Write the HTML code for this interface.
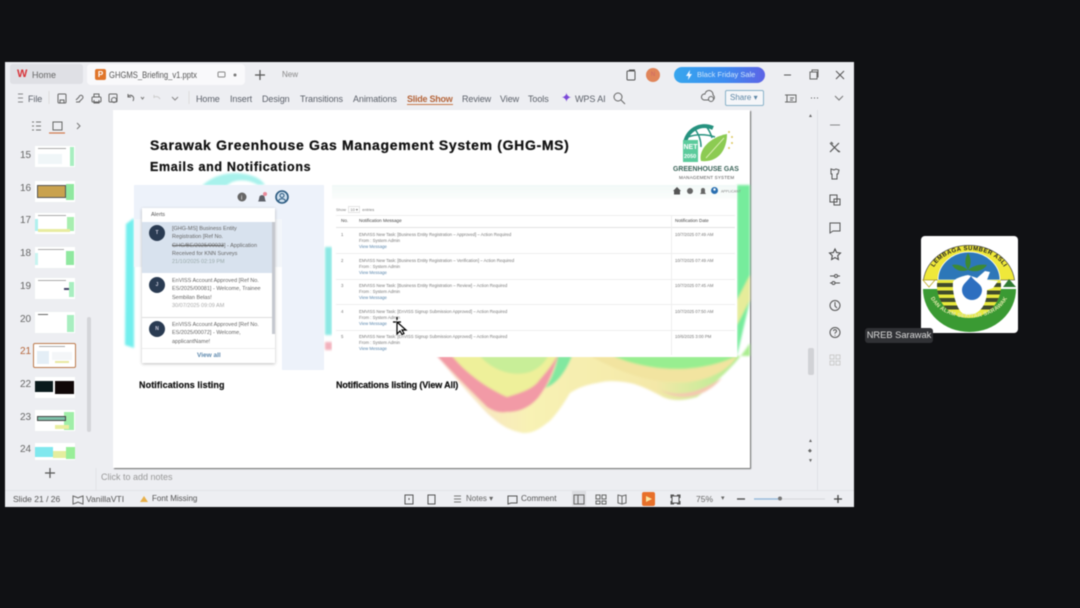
<!DOCTYPE html>
<html><head><meta charset="utf-8"><style>
html,body{margin:0;padding:0;width:1080px;height:608px;overflow:hidden;background:#101114;font-family:"Liberation Sans",sans-serif}
#w{position:absolute;left:0;top:0;width:1080px;height:608px;overflow:hidden;filter:blur(.5px)}
.a{position:absolute;white-space:nowrap}
.m{font-size:9px;color:#5a5f68;letter-spacing:-.07px}
.n{font-size:10px;color:#666}
.th{position:absolute;left:35px;width:40px;height:21px;background:#fff;overflow:hidden}
.th i{position:absolute;display:block}
.d{font-size:4.3px;color:#777;position:absolute;white-space:nowrap}
.l{font-size:4.3px;color:#5a86ad;position:absolute;white-space:nowrap}
.al{font-size:5.5px;line-height:8.3px;color:#666;position:absolute;white-space:nowrap}
.av{position:absolute;left:149px;width:16px;height:16px;border-radius:50%;background:#2a3b52;color:#ccd;font-size:5px;font-weight:bold;text-align:center;line-height:16px}
svg{position:absolute;overflow:visible}
</style></head><body><div id="w">
<div class="a" style="left:5px;top:62px;width:849px;height:445px;background:#edeef2"></div>
<div class="a" style="left:572px;top:491px;width:14px;height:15px;background:#dcdde1"></div>
<div class="a" style="left:10px;top:64px;width:73px;height:20px;background:#dfe0e5;border-radius:3px"></div>
<div class="a" style="left:87px;top:64px;width:158px;height:21px;background:#f9f9fb;border-radius:4px"></div>
<div class="a" style="left:17px;top:68px;font-size:11px;font-weight:bold;color:#d8343a">W</div>
<div class="a" style="left:32px;top:70px;font-size:9px;color:#666">Home</div>
<div class="a" style="left:95px;top:69px;width:11px;height:11px;background:#e0752a;border-radius:2px;color:#fff;font-size:8px;font-weight:bold;text-align:center;line-height:11px">P</div>
<div class="a" style="left:109px;top:70px;font-size:9px;color:#555;transform:scaleX(.85);transform-origin:left top">GHGMS_Briefing_v1.pptx</div>
<svg style="left:0;top:0" width="1080" height="608" fill="none" stroke="#666" stroke-width="1">
<rect x="218" y="72" width="7" height="5" rx="1" stroke="#888"/><circle cx="235" cy="75" r="1.5" fill="#777" stroke="none"/>
<path d="M260 70v10M255 75h10" stroke="#555" stroke-width="1.2"/>
<rect x="627" y="71" width="8" height="9" rx="1" stroke="#555"/><path d="M629 70h6" stroke="#555"/>
<path d="M784 75h7" stroke="#555"/><rect x="810" y="72" width="7" height="7" stroke="#666"/><path d="M812 72v-2h6v7h-1" stroke="#666"/><path d="M836 71l8 8M844 71l-8 8" stroke="#555"/>
<path d="M18 94h5M18 98h5M18 102h5" stroke="#888"/>
<path d="M49 91v13" stroke="#ddd"/>
<rect x="58" y="94" width="8" height="9" rx="1"/><path d="M60 103v-3h4v3"/>
<path d="M76 100l3-3a2 2 0 1 1 3 2l-3 3M76 102h4" />
<rect x="92" y="97" width="9" height="5" rx="1"/><path d="M94 97v-3h5v3M94 100v3h5v-3"/>
<rect x="109" y="94" width="8" height="8" rx="1"/><circle cx="114" cy="100" r="2.5"/>
<path d="M128 96c4-2 7 1 5 5M128 94v3h3"/><path d="M141 97l1.500 2 1.500-2" stroke="#777"/>
<path d="M154 97c3-1 5 0 6 2M154 95v3" stroke="#ccc"/><path d="M172 97l3 3 3-3" stroke="#888"/>
<path d="M189 91v13" stroke="#ddd"/>
<circle cx="618" cy="97" r="4" stroke="#666"/><path d="M621 100l4 4" stroke="#666"/>
<path d="M704 100a3 3 0 0 1 1-6 4 4 0 0 1 8 1 3 3 0 0 1 0 5z" stroke="#666"/><circle cx="711" cy="99" r="2.500" fill="#edeef2" stroke="#666"/>
<rect x="787" y="95" width="9" height="7" stroke="#666"/><path d="M785 95h3M785 102h3M790 98h4M790 100h3" stroke="#666"/>
<path d="M811 98h1M814 98h1M817 98h1" stroke="#555"/><path d="M835 96l4 4 4-4" stroke="#777"/>
<path d="M36 122h5M36 126h5M36 130h5M32 122h2M32 126h2M32 130h2" stroke="#777"/>
<rect x="53" y="122" width="9" height="8" stroke="#666"/><path d="M49 133h16" stroke="#d2794a" stroke-width="1.200"/>
<path d="M77 123l3 3-3 3" stroke="#777"/>
<path d="M45 473h10M50 468v10" stroke="#555" stroke-width="1.200"/>
<path d="M830 125h10" stroke="#888"/>
<path d="M830 143l9 9M839 143l-9 9M831 142l2 2M837 150l3 2" stroke="#555" stroke-width="1.200"/>
<path d="M831 169l3 1 2-1 3 1-1 4h-1v5h-5v-5h-1z" stroke="#555"/>
<rect x="830" y="195" width="7" height="7" stroke="#555"/><rect x="834" y="199" width="6" height="6" stroke="#555"/>
<path d="M830 223h10v8h-7l-3 2z" stroke="#555"/>
<path d="M835 249l1.600 3.500 3.900.5-2.800 2.600.7 3.900-3.400-1.900-3.400 1.900.7-3.900-2.800-2.600 3.900-.5z" stroke="#444"/>
<path d="M830 276h5M838 276h2M830 283h2M835 283h5" stroke="#555"/><circle cx="836" cy="276" r="1.500" stroke="#555"/><circle cx="833.500" cy="283" r="1.500" stroke="#555"/>
<circle cx="835" cy="305.500" r="5" stroke="#555"/><path d="M835 302v4l2 2" stroke="#555"/>
<circle cx="835" cy="332.500" r="5" stroke="#555"/><path d="M833.500 331a1.500 1.500 0 1 1 2 1.500c-.5.300-.5.700-.5 1.200M835 335v.6" stroke="#555"/>
<rect x="830" y="355" width="4" height="4" stroke="#ccc"/><rect x="836" y="355" width="4" height="4" stroke="#ccc"/><rect x="830" y="361" width="4" height="4" stroke="#ccc"/><rect x="836" y="361" width="4" height="4" stroke="#ccc"/>
<path d="M96 468v22" stroke="#e2e3e7"/><path d="M817.500 110v380" stroke="#e0e1e6"/><path d="M5 490.500h849" stroke="#e2e3e7"/>
<path d="M73 496l3 1 2 1 2-1 3-1v8l-3-1-2-1-2 1-3 1z" stroke="#666"/>
<path d="M144 496l4 6h-8z" fill="#e8b04a" stroke="none"/>
<rect x="405" y="495" width="8" height="9" stroke="#555"/><path d="M409 498v2" stroke="#555"/>
<rect x="428" y="495" width="7" height="9" stroke="#555"/>
<path d="M454 496h7M454 499h7M454 502h7" stroke="#777"/>
<path d="M508 504v-8h9v7h-6z" stroke="#555"/>
<rect x="574" y="495" width="10" height="9" stroke="#666"/><path d="M578 495v9" stroke="#666"/>
<rect x="596" y="495" width="4" height="4" stroke="#666"/><rect x="602" y="495" width="4" height="4" stroke="#666"/><rect x="596" y="501" width="4" height="3" stroke="#666"/><rect x="602" y="501" width="4" height="3" stroke="#666"/>
<path d="M622 504v-8l-4-1v8zM622 504v-8l4-1v8z" stroke="#666"/>
<rect x="672" y="496" width="7" height="7" stroke="#555"/><path d="M671 498v-3h3M677 495h3v3M680 501v3h-3M674 504h-3v-3" stroke="#555"/>
<path d="M737 499h8" stroke="#444" stroke-width="1.300"/>
<path d="M834 499h8M838 495v8" stroke="#444" stroke-width="1.300"/>
<path d="M754 499h24" stroke="#8ab4d8" stroke-width="1.200"/><path d="M782 499h43" stroke="#d4d6da"/>
<circle cx="780" cy="498.500" r="2" fill="#777" stroke="none"/>
</svg>
<div class="a" style="left:646px;top:68px;width:14px;height:14px;border-radius:50%;background:#e0855a;color:#c66;font-size:6px;text-align:center;line-height:14px">N</div>
<div class="a" style="left:674px;top:67px;width:91px;height:16px;border-radius:8px;background:linear-gradient(90deg,#37a6ee,#3d8cf0 55%,#5d63e6);color:#cfe6fb;font-size:7.500px;line-height:16px;text-indent:23px">Black Friday Sale</div>
<svg style="left:685px;top:70px" width="8" height="10"><path d="M5 0L1 6h2.500L3 10l4-6H4.500z" fill="#eaf4ff"/></svg>
<div class="a m" style="left:28px;top:94px">File</div>
<div class="a m" style="left:196px;top:94px">Home</div>
<div class="a m" style="left:230px;top:94px">Insert</div>
<div class="a m" style="left:262px;top:94px">Design</div>
<div class="a m" style="left:300px;top:94px">Transitions</div>
<div class="a m" style="left:353px;top:94px">Animations</div>
<div class="a m" style="left:407px;top:94px;color:#b5653a;font-weight:bold;border-bottom:1px solid #c8794a;letter-spacing:-.25px">Slide Show</div>
<div class="a m" style="left:462px;top:94px">Review</div>
<div class="a m" style="left:500px;top:94px">View</div>
<div class="a m" style="left:528px;top:94px">Tools</div>
<div class="a m" style="left:561px;top:90px;font-size:13px;color:#7a48d8">✦</div>
<div class="a m" style="left:575px;top:94px">WPS AI</div>
<div class="a" style="left:725px;top:90px;width:37px;height:14px;border:1px solid #8ab2c9;border-radius:2px;color:#5c86a5;font-size:8px;line-height:14px;text-indent:4px;background:#f5f6f9">Share ▾</div>
<div class="a" style="left:282px;top:70px;font-size:8px;color:#888">New</div>

<div class="a" style="left:113px;top:110px;width:637px;height:358px;background:#fff;box-shadow:1px 1px 1px #666;overflow:hidden"></div>
<svg style="left:113px;top:110px" width="637" height="358" viewBox="113 110 637 358">
<defs>
<linearGradient id="g" x1="0" x2="1"><stop offset="0" stop-color="#f8dccc"/><stop offset=".3" stop-color="#f8f2b4"/><stop offset=".7" stop-color="#f4e8a8"/><stop offset="1" stop-color="#a8ee90"/></linearGradient>
<filter id="b"><feGaussianBlur stdDeviation="1"/></filter>
</defs>
<g filter="url(#b)">
<path d="M437 356H750V343C742 355 730 372 697 397C680 402 670 400 663 397C650 390 640 385 630 383C615 380 605 381 597 383C585 385 578 388 570 393C560 410 550 422 547 423C535 433 528 433 523 433C505 430 495 420 487 413C470 395 450 372 437 356Z" fill="url(#g)"/>
<path d="M437 356L463 383 487 407C495 412 500 413 507 412C520 412 530 407 538 398C548 385 553 372 558 356Z" fill="#f29aa6"/>
<path d="M452 356C462 368 480 385 507 397C520 393 530 390 537 383C548 370 553 364 557 356Z" fill="#eef09a"/>
<path d="M480 356C490 368 510 378 530 372C540 368 545 362 548 356Z" fill="#c8ee98"/>
<path d="M558 356C556 368 550 382 545 388C556 385 566 372 572 356Z" fill="#82e8a0"/>
<path d="M590 356C620 372 650 385 690 382C715 378 730 368 737 356Z" fill="#f2e4a0"/>
<path d="M613 356C640 368 690 378 737 356Z" fill="#98ee90"/>
<path d="M660 390C680 398 700 392 722 378C705 398 680 402 660 390Z" fill="#f4c8b0"/>
<path d="M737 185H750V300L737 356Z" fill="#76ec9c"/>
<path d="M737 300L750 275V300L737 325Z" fill="#e6ec9a"/>
<path d="M202 186C212 176 228 171 245 174 256 176 262 180 265 185H258C250 180 240 179 232 182L226 186Z" fill="#a8f2ec"/>
<path d="M134 218L126 224 125 345 134 348Z" fill="#72efee"/>
<path d="M325 247H332V335H325Z" fill="#8ce8e4"/>
<path d="M325 342H332V350H325Z" fill="#f2b0bc"/>
</g>
</svg>
<div class="a" style="left:150px;top:137px;font-size:14px;font-weight:bold;color:#111;letter-spacing:.67px;-webkit-text-stroke:.25px #111">Sarawak Greenhouse Gas Management System (GHG-MS)</div>
<div class="a" style="left:150px;top:160px;font-size:12.500px;font-weight:bold;color:#111;letter-spacing:.67px;-webkit-text-stroke:.25px #111">Emails and Notifications</div>

<svg style="left:680px;top:122px" width="60" height="44">
<path d="M5 22C6 9 20 0 33 6" fill="none" stroke="#26927f" stroke-width="4"/>
<path d="M15 7c4 6 6 11 6 18M26 4c3 4 5 8 6 12M8 15c8-3 18-3 27 0" fill="none" stroke="#26927f" stroke-width="1.500"/>
<path d="M21 39C18 28 30 15 47 12 47 28 38 41 21 39Z" fill="#8ccb52"/>
<path d="M26 36L44 16" stroke="#d8eeb0" fill="none"/>
<rect x="3" y="18" width="15" height="22" fill="#5bcb9c"/>
<text x="3.500" y="27" font-size="7" fill="#fff" font-weight="bold" font-family="Liberation Sans">NET</text>
<text x="4" y="36" font-size="5.500" fill="#fff" font-weight="bold" font-family="Liberation Sans">2050</text>
<circle cx="49" cy="10" r="1" fill="#ddc860"/><circle cx="52" cy="15" r="1" fill="#ddc860"/><circle cx="52" cy="21" r="1" fill="#ddc860"/><circle cx="49" cy="26" r="1" fill="#ddc860"/>
</svg>
<div class="a" style="left:673px;top:166px;font-size:6.900px;font-weight:bold;color:#3a6358">GREENHOUSE GAS</div>
<div class="a" style="left:679px;top:175px;font-size:4.500px;color:#555;letter-spacing:.2px">MANAGEMENT SYSTEM</div>

<div class="a" style="left:134px;top:185px;width:190px;height:34px;background:#edf2fa"></div>
<div class="a" style="left:282px;top:185px;width:42px;height:185px;background:#edf2fa"></div>
<div class="a" style="left:134px;top:219px;width:148px;height:48px;background:#f3f6fa"></div>
<div class="a" style="left:142px;top:208px;width:133px;height:155px;background:#fff;box-shadow:0 1px 3px rgba(0,0,0,.25)"></div>
<div class="a" style="left:142px;top:222px;width:130px;height:51px;background:#d8e2ee"></div>
<div class="a" style="left:272px;top:222px;width:3px;height:112px;background:#c5c8cf"></div>
<div class="a" style="left:142px;top:317px;width:130px;height:1px;background:#ddd"></div>
<div class="a" style="left:142px;top:348px;width:133px;height:1px;background:#eee"></div>
<div class="a" style="left:151px;top:212px;font-size:5.500px;color:#555">Alerts</div>
<div class="av" style="top:225px">T</div><div class="av" style="top:277px">J</div><div class="av" style="top:321px">N</div>
<div class="al" style="left:172px;top:225px">[GHG-MS] Business Entity<br>Registration [Ref No.<br><span style="text-decoration:line-through">GHG/BE/2025/00023</span>] - Application<br>Received for KNN Surveys<br><span style="color:#9aa">21/10/2025 02:19 PM</span></div>
<div class="al" style="left:172px;top:277px">EnVISS Account Approved [Ref No.<br>ES/2025/00081] - Welcome, Trainee<br>Sembilan Belas!<br><span style="color:#aaa">30/07/2025 09:09 AM</span></div>
<div class="al" style="left:172px;top:321px">EnVISS Account Approved [Ref No.<br>ES/2025/00072] - Welcome,<br>applicantName!</div>
<div class="a" style="left:197px;top:352px;font-size:6.500px;font-weight:bold;color:#5d88ad">View all</div>
<svg style="left:236px;top:189px" width="56" height="16">
<circle cx="6" cy="8" r="4.500" fill="#666"/><text x="5" y="10.500" font-size="6" fill="#fff" font-family="Liberation Sans">i</text>
<path d="M22 12.500c1-1 1-3 1.500-5a3 3 0 0 1 5 0c.5 2 .5 4 1.500 5z" fill="#5c6068"/><circle cx="29" cy="5" r="2" fill="#e88a9a"/>
<circle cx="46" cy="8" r="6" fill="#cfe0ee" stroke="#2a5a80" stroke-width="1.600"/><circle cx="46" cy="6.500" r="2" fill="none" stroke="#2a5a80"/><path d="M42.500 12c1-3 6-3 7 0" fill="none" stroke="#2a5a80"/>
</svg>

<div class="a" style="left:332px;top:185px;width:405px;height:172px;background:#fff"></div>
<div class="a" style="left:332px;top:185px;width:405px;height:14px;background:linear-gradient(#f2f9f7,#fbfdfc)"></div>
<svg style="left:672px;top:185px" width="66" height="12">
<path d="M1 6l4-4 4 4h-1v3.500H2V6z" fill="#555"/><circle cx="18" cy="6" r="3" fill="#666"/><path d="M28 9h6l-1-1.500V5a2 2 0 0 0-4 0v2.500z" fill="#666"/><circle cx="42.500" cy="5.500" r="3.500" fill="#2a6fb0"/><circle cx="42.500" cy="4.500" r="1.200" fill="#fff"/>
<text x="49" y="7.500" font-size="3.600" fill="#888" font-family="Liberation Sans">APPLICANT</text>
</svg>
<div class="d" style="left:336px;top:207px;font-size:4px">Show &nbsp;<span style="border:1px solid #e4e4e4">&nbsp;10 ▾&nbsp;</span>&nbsp; entries</div>
<div class="a" style="left:336px;top:215px;width:399px;height:1px;background:#eee"></div>
<div class="a" style="left:336px;top:227px;width:399px;height:1px;background:#e2e2e2"></div>
<div class="a" style="left:336px;top:253px;width:399px;height:1px;background:#eee"></div>
<div class="a" style="left:336px;top:279px;width:399px;height:1px;background:#eee"></div>
<div class="a" style="left:336px;top:304px;width:399px;height:1px;background:#eee"></div>
<div class="a" style="left:336px;top:330px;width:399px;height:1px;background:#eee"></div>
<div class="a" style="left:671px;top:215px;width:1px;height:140px;background:#eee"></div>
<div class="d" style="left:341px;top:218px;color:#444;font-size:4.600px">No.</div>
<div class="d" style="left:359px;top:218px;color:#444;font-size:4.600px">Notification Message</div>
<div class="d" style="left:675px;top:218px;color:#444;font-size:4.600px">Notification Date</div>
<div class="d" style="left:341px;top:232px">1</div><div class="d" style="left:341px;top:258px">2</div><div class="d" style="left:341px;top:283px">3</div><div class="d" style="left:341px;top:309px">4</div><div class="d" style="left:341px;top:334px">5</div>
<div class="d" style="left:359px;top:232px">EMVISS New Task: [Business Entity Registration – Approved] – Action Required</div>
<div class="d" style="left:359px;top:238px">From : System Admin</div><div class="l" style="left:359px;top:244px">View Message</div>
<div class="d" style="left:359px;top:258px">EMVISS New Task: [Business Entity Registration – Verification] – Action Required</div>
<div class="d" style="left:359px;top:264px">From : System Admin</div><div class="l" style="left:359px;top:270px">View Message</div>
<div class="d" style="left:359px;top:283px">EMVISS New Task: [Business Entity Registration – Review] – Action Required</div>
<div class="d" style="left:359px;top:289px">From : System Admin</div><div class="l" style="left:359px;top:295px">View Message</div>
<div class="d" style="left:359px;top:309px">EMVISS New Task: [EnVISS Signup Submission Approved] – Action Required</div>
<div class="d" style="left:359px;top:315px">From : System Admin</div><div class="l" style="left:359px;top:321px">View Message</div>
<div class="d" style="left:359px;top:334px">EMVISS New Task: [EnVISS Signup Submission Approved] – Action Required</div>
<div class="d" style="left:359px;top:340px">From : System Admin</div><div class="l" style="left:359px;top:346px">View Message</div>
<div class="d" style="left:675px;top:232px">10/7/2025 07:49 AM</div><div class="d" style="left:675px;top:258px">10/7/2025 07:49 AM</div><div class="d" style="left:675px;top:283px">10/7/2025 07:45 AM</div><div class="d" style="left:675px;top:309px">10/7/2025 07:50 AM</div><div class="d" style="left:675px;top:334px">10/6/2025 3:00 PM</div>
<svg style="left:390px;top:316px" width="18" height="20">
<path d="M7 6v12l3-3 2 3.500 2-1-2-3.500h4z" fill="#fff" stroke="#000" stroke-width="1.200"/>
<path d="M3 6h3M8 6h3M7 1v3" stroke="#000" stroke-width="1.200"/>
</svg>
<div class="a" style="left:139px;top:380px;font-size:9px;font-weight:bold;color:#111;letter-spacing:.1px;-webkit-text-stroke:.2px #111">Notifications listing</div>
<div class="a" style="left:336px;top:380px;font-size:9px;font-weight:bold;color:#111;letter-spacing:-.12px;-webkit-text-stroke:.2px #111">Notifications listing (View All)</div>

<div class="a" style="left:808px;top:348px;width:6px;height:27px;background:#d1d2d6;border-radius:2px"></div>
<div class="a" style="left:87px;top:317px;width:4px;height:115px;background:#d4d5d9;border-radius:2px"></div>
<div class="a" style="left:808px;top:113px;font-size:5px;color:#666">▲</div>
<div class="a" style="left:808px;top:436px;font-size:5px;line-height:10px;color:#666">▲<br>◆<br>▼</div>

<div class="a n" style="left:20px;top:150px">15</div><div class="a n" style="left:20px;top:183px">16</div><div class="a n" style="left:20px;top:215px">17</div><div class="a n" style="left:20px;top:248px">18</div><div class="a n" style="left:20px;top:281px">19</div><div class="a n" style="left:20px;top:314px">20</div><div class="a n" style="left:20px;top:346px;color:#b5653a">21</div><div class="a n" style="left:20px;top:379px">22</div><div class="a n" style="left:20px;top:412px">23</div><div class="a n" style="left:20px;top:444px">24</div>
<div class="th" style="top:146px"><i style="right:1px;top:1px;width:4px;height:19px;background:#a8eec0"></i><i style="left:3px;top:2px;width:28px;height:1px;background:#aaa"></i><i style="left:3px;top:8px;width:24px;height:10px;background:#f0f6f8"></i></div>
<div class="th" style="top:181px"><i style="right:1px;top:3px;width:8px;height:16px;background:#90e8a0"></i><i style="left:2px;top:4px;width:29px;height:13px;background:#c9a24e;border:1px solid #555;box-sizing:border-box"></i></div>
<div class="th" style="top:213px"><i style="right:1px;top:4px;width:7px;height:14px;background:#a8eeb0"></i><i style="left:3px;top:2px;width:28px;height:1px;background:#aaa"></i><i style="left:3px;top:16px;width:32px;height:3px;background:#e8eca0"></i><i style="left:0;top:6px;width:3px;height:12px;background:#b0f0ee"></i></div>
<div class="th" style="top:247px"><i style="right:1px;top:4px;width:8px;height:14px;background:#90e8a0"></i><i style="left:3px;top:2px;width:26px;height:1px;background:#aaa"></i><i style="left:0;top:6px;width:3px;height:12px;background:#c8f4f0"></i></div>
<div class="th" style="top:278px"><i style="right:1px;top:4px;width:5px;height:15px;background:#a8eec0"></i><i style="left:3px;top:2px;width:28px;height:1px;background:#aaa"></i><i style="left:29px;top:10px;width:5px;height:2px;background:#446"></i></div>
<div class="th" style="top:312px"><i style="right:1px;top:3px;width:7px;height:17px;background:#a8eec0"></i><i style="left:3px;top:2px;width:10px;height:1px;background:#666"></i></div>
<div class="a" style="left:33px;top:343px;width:41px;height:23px;border:1px solid #bd7a4c;background:#fff;border-radius:2px"></div>
<div class="a" style="left:37px;top:351px;width:12px;height:13px;background:#e4eef6"></div>
<div class="a" style="left:39px;top:346px;width:26px;height:1px;background:#aaa"></div>
<div class="a" style="left:52px;top:352px;width:20px;height:8px;background:#f4f6f8"></div>
<div class="a" style="left:55px;top:361px;width:14px;height:2px;background:#e8e8a0"></div>
<div class="th" style="top:377px"><i style="left:0;top:4px;width:18px;height:11px;background:#0a1a1c"></i><i style="left:20px;top:4px;width:19px;height:13px;background:#100808"></i></div>
<div class="th" style="top:410px"><i style="right:1px;top:2px;width:10px;height:18px;background:#a0eea8"></i><i style="left:2px;top:6px;width:29px;height:5px;background:#7dbfa8;border:1px solid #444;box-sizing:border-box"></i><i style="left:20px;top:15px;width:14px;height:4px;background:#eaeea0"></i></div>
<div class="th" style="top:443px;height:17px"><i style="left:0;top:4px;width:18px;height:10px;background:#80e8ee"></i><i style="left:18px;top:8px;width:14px;height:7px;background:#e4ee9e"></i><i style="right:0;top:4px;width:9px;height:12px;background:#98ee98"></i></div>

<div class="a" style="left:101px;top:472px;font-size:9px;color:#999">Click to add notes</div>
<div class="a" style="left:13px;top:494px;font-size:8.500px;color:#555">Slide 21 / 26</div>
<div class="a" style="left:86px;top:494px;font-size:8.500px;color:#555">VanillaVTI</div>
<div class="a" style="left:152px;top:494px;font-size:8px;color:#555">Font Missing</div>
<div class="a" style="left:466px;top:494px;font-size:8px;color:#666">Notes ▾</div>
<div class="a" style="left:521px;top:494px;font-size:8.200px;color:#555">Comment</div>
<div class="a" style="left:642px;top:492px;width:13px;height:14px;background:#e8702a;border-radius:2px"></div>
<svg style="left:645px;top:495px" width="8" height="8"><path d="M1 1l6 3-6 3z" fill="#fbe6a0"/></svg>
<div class="a" style="left:696px;top:494px;font-size:8.500px;color:#666">75%</div>
<div class="a" style="left:721px;top:494px;font-size:7px;color:#666">▾</div>

<div class="a" style="left:921px;top:236px;width:97px;height:97px;background:#fff;border-radius:4px;overflow:hidden">
<svg style="left:0;top:0" width="97" height="97" viewBox="0 0 97 97">
<defs>
<path id="ta" d="M10 42A38 28 0 0 1 86 42"/><path id="tb" d="M9 60A40 28 0 0 0 87 60"/>
<clipPath id="c"><circle cx="48" cy="50" r="32"/></clipPath>
</defs>
<path d="M2.400 44A46 40 0 0 1 93.600 44Z" fill="#efe83a" stroke="#333" stroke-width=".6"/>
<path d="M17 44A31 28 0 0 1 79 44Z" fill="#2d77b8" stroke="#fff" stroke-width=".8"/>
<path d="M2 53H95A46.500 43 0 0 1 2 53Z" fill="#3a9a33"/>
<g clip-path="url(#c)">
<rect x="16" y="44" width="64" height="38" fill="#e8e83c"/>
<path d="M16 47h64v4H16zM16 54.500h64v4H16zM16 62h64v4H16zM16 69.500h64v4H16z" fill="#3f4a2c"/>
</g>
<path d="M2 44h12l-6 7z" fill="#fff" stroke="#bba820" stroke-width=".8"/>
<path d="M88 43l7 8H82z" fill="#2f7a32"/>
<path d="M32 46C34 42 42 40 47 39L56 42 64 35 69 36 66 44 77 45 72 52 66 54C66 62 64 70 58 75 52 80 44 80 40 76 35 70 31 56 32 46Z" fill="#fff"/>
<path d="M50 40C54 46 61 48 61 54A10 10 0 0 1 41 54C41 48 46 46 50 40Z" fill="#2d6fc0"/>
<path d="M47 34C41 29 35 28 31 29 35 35 41 36 47 34ZM47 34C53 29 60 28 66 29 61 36 53 36 47 34ZM47 34C43 28 44 22 47 17 50 22 51 28 47 34Z" fill="#3d8a33"/>
<text font-size="6" font-weight="bold" fill="#222" font-family="Liberation Sans" letter-spacing=".45" text-anchor="middle"><textPath href="#ta" startOffset="50%">LEMBAGA SUMBER ASLI</textPath></text>
<text font-size="5.600" font-weight="bold" fill="#dfe8a8" font-family="Liberation Sans" letter-spacing=".2" text-anchor="middle"><textPath href="#tb" startOffset="50%">DAN ALAM SEKITAR SARAWAK</textPath></text>
</svg></div>
<div class="a" style="left:865px;top:328px;width:68px;height:15px;background:#303135;border-radius:3px;color:#dcdcdc;font-size:9.300px;line-height:15px;text-align:center">NREB Sarawak</div>
</div></body></html>
